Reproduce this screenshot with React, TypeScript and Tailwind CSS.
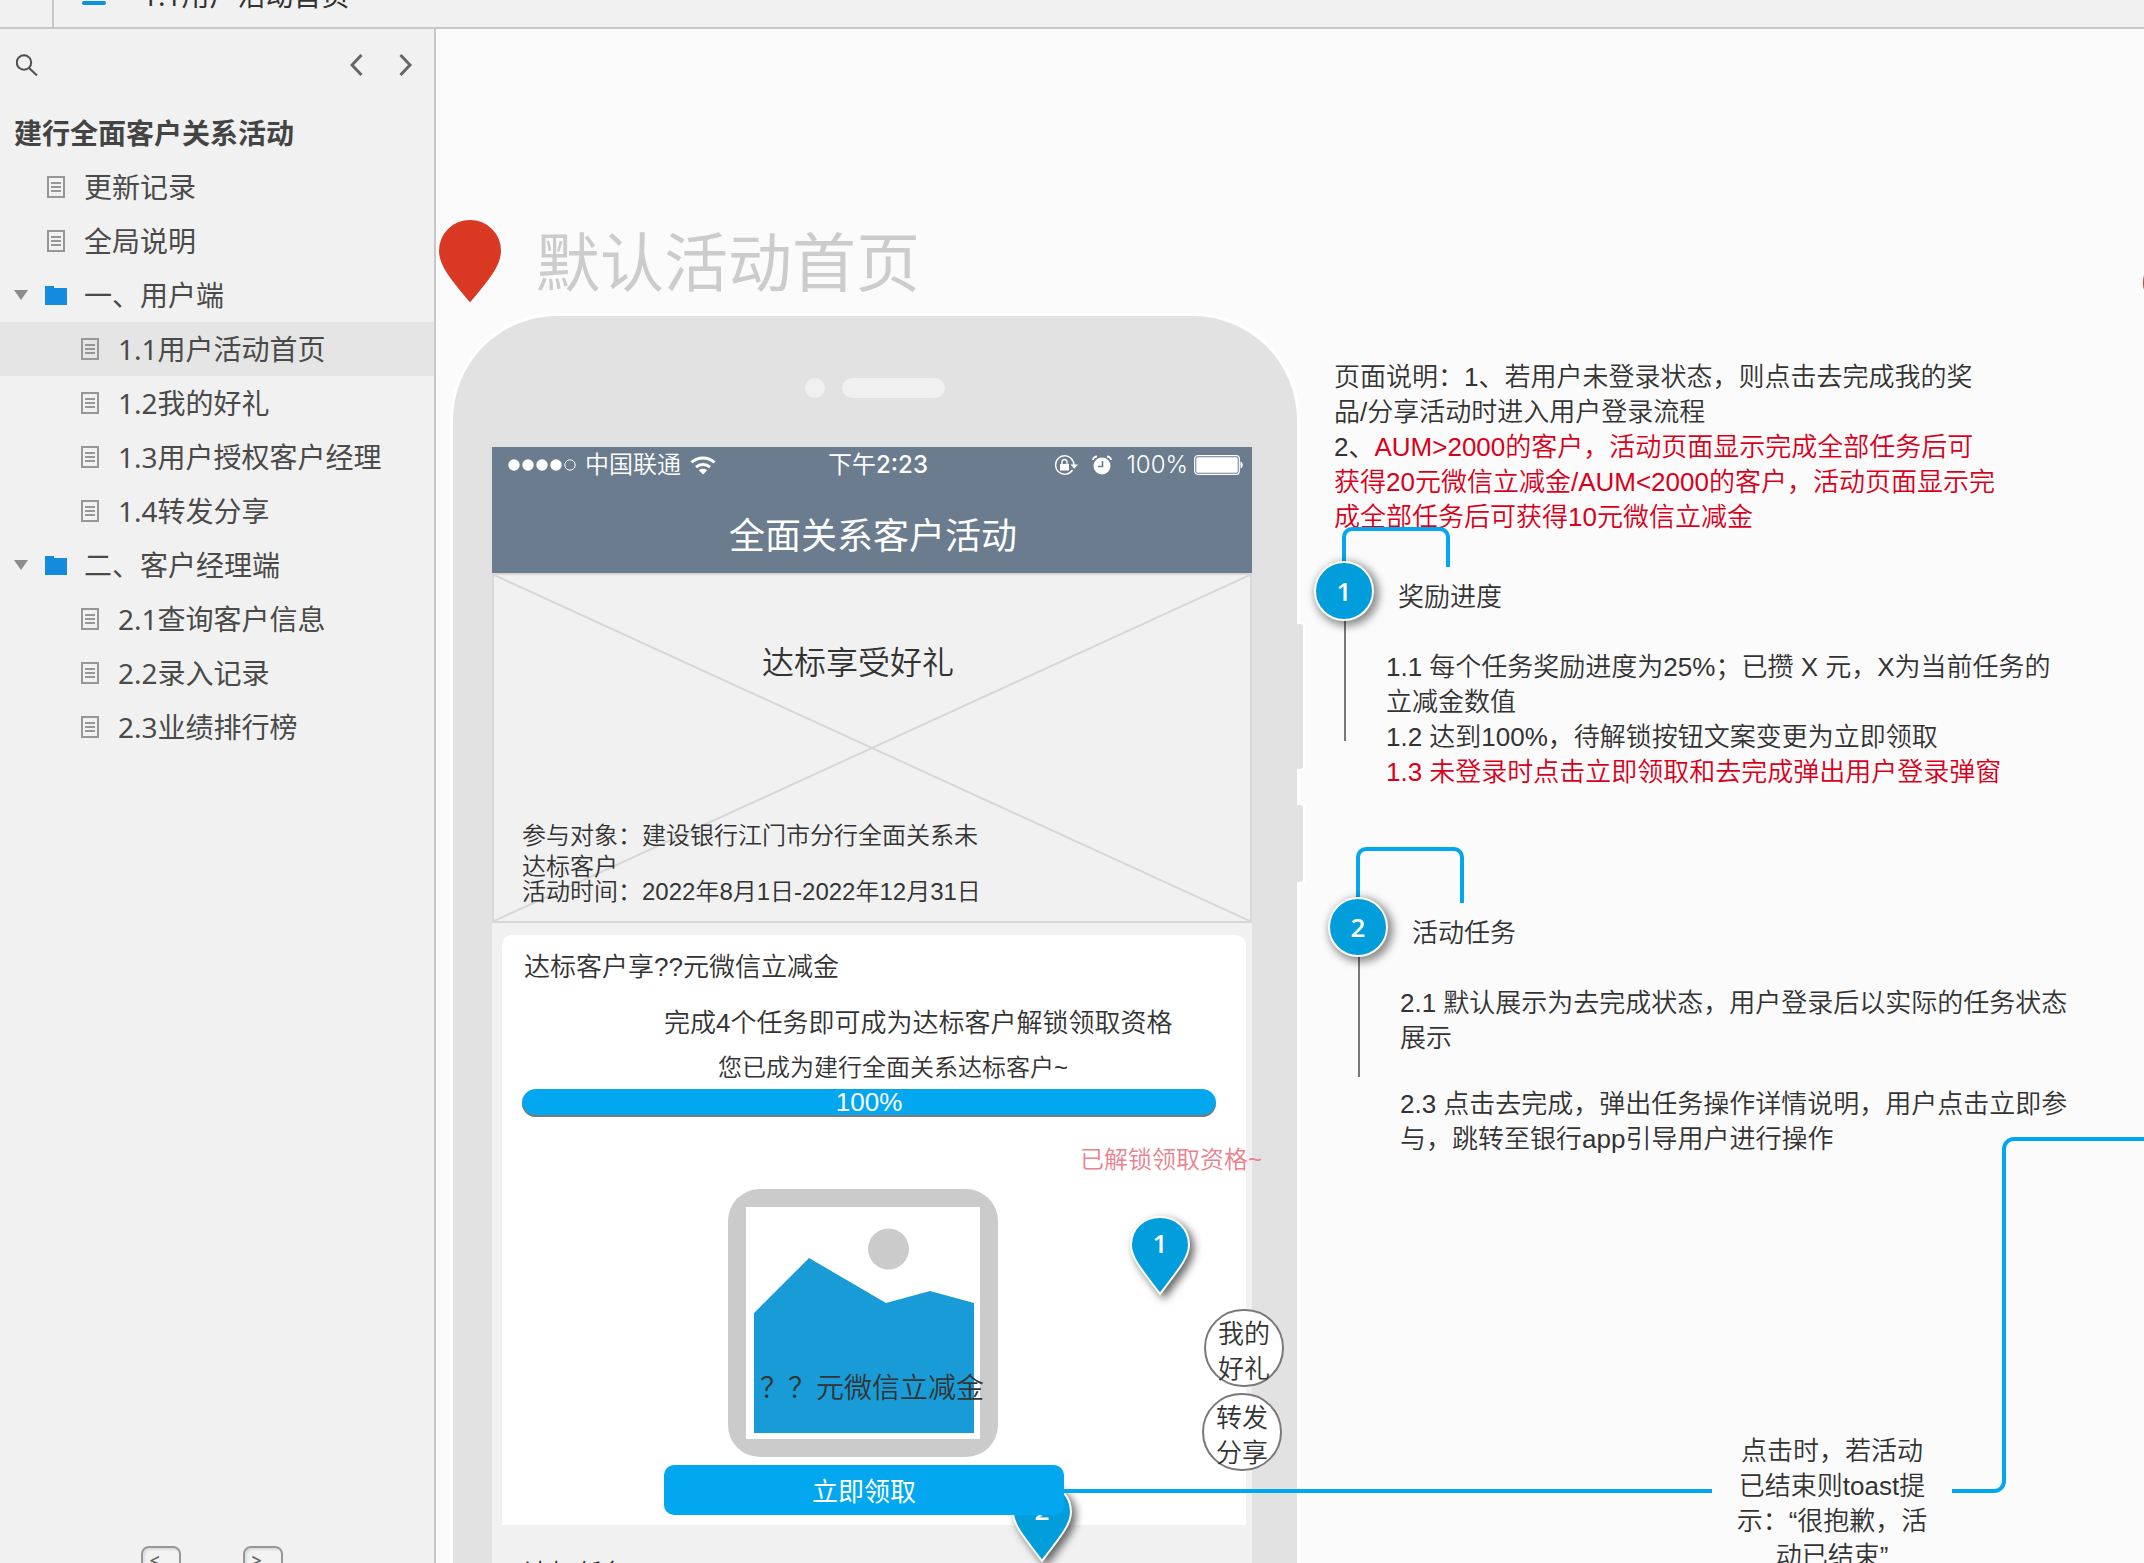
import React from "react";

type Page = { title: string; level: 1 | 2; folder?: boolean; active?: boolean };

const pages: Page[] = [
  { title: "更新记录", level: 1 },
  { title: "全局说明", level: 1 },
  { title: "一、用户端", level: 1, folder: true },
  { title: "1.1用户活动首页", level: 2, active: true },
  { title: "1.2我的好礼", level: 2 },
  { title: "1.3用户授权客户经理", level: 2 },
  { title: "1.4转发分享", level: 2 },
  { title: "二、客户经理端", level: 1, folder: true },
  { title: "2.1查询客户信息", level: 2 },
  { title: "2.2录入记录", level: 2 },
  { title: "2.3业绩排行榜", level: 2 },
];

function DocIcon() {
  return (
    <svg width="18" height="22" viewBox="0 0 18 22" fill="none" stroke="#979797" strokeWidth="2">
      <path d="M1 1h16v20H1zM4 7h10M4 11h10M4 15h10" />
    </svg>
  );
}

function FolderIcon() {
  return (
    <svg width="22" height="19" viewBox="0 0 22 19">
      <path d="M0 0h9v2h13v17H0z" fill="#158bdf" />
    </svg>
  );
}

function PageRow({ page }: { page: Page }) {
  return (
    <li>
      <a
        href="#"
        aria-current={page.active ? "page" : undefined}
        className={`flex h-[54px] items-center whitespace-nowrap ${page.active ? "bg-[#e5e5e5]" : ""} ${page.level === 2 ? "pl-[81px]" : "pl-[14px]"}`}
      >
        {page.level === 1 && (
          <span className="w-[31px] shrink-0">
            {page.folder && (
              <svg width="14" height="10" viewBox="0 0 14 10">
                <path d="M0 0h14L7 10z" fill="#8c8c8c" />
              </svg>
            )}
          </span>
        )}
        <span className={`flex shrink-0 ${page.level === 1 ? "w-[39px]" : "w-[37px]"}`}>
          {page.folder ? <FolderIcon /> : <span className={page.level === 1 ? "pl-0.5" : ""}><DocIcon /></span>}
        </span>
        <span>{page.title}</span>
      </a>
    </li>
  );
}

function Sidebar() {
  return (
    <aside className="flex w-[436px] shrink-0 flex-col border-r-2 border-[#c8c8c8] bg-[#f1f1f1] text-[28px] leading-9 text-[#4a4a4a] font-normal font-['Noto_Sans','Noto_Sans_CJK_SC',sans-serif]">
      <div className="flex h-[77px] shrink-0 items-start pt-[25px] pl-4 pr-[22px] text-[#666]">
        <button aria-label="搜索" className="mr-auto">
          <svg width="22" height="22" viewBox="0 0 22 22" fill="none" stroke="#4f4f4f" strokeWidth="2">
            <circle cx="8" cy="8.500" r="7.200" />
            <path d="M13 14l8 7.500" />
          </svg>
        </button>
        <button aria-label="上一页" className="mr-[36px]">
          <svg width="13" height="22" viewBox="0 0 13 22" fill="none" stroke="#666" strokeWidth="3">
            <path d="M11.500 1L2 11l9.500 10" />
          </svg>
        </button>
        <button aria-label="下一页">
          <svg width="13" height="22" viewBox="0 0 13 22" fill="none" stroke="#666" strokeWidth="3">
            <path d="M1.500 1L11 11l-9.500 10" />
          </svg>
        </button>
      </div>
      <h1 className="flex h-[54px] shrink-0 items-center pl-[14px] font-bold text-[#444]">建行全面客户关系活动</h1>
      <nav className="min-h-0 flex-1">
        <ul>
          {pages.map((p) => (
            <PageRow key={p.title} page={p} />
          ))}
        </ul>
      </nav>
      <div className="flex h-[17px] shrink-0 items-start gap-[14px] overflow-hidden pl-[90px] text-[22px] text-[#666]">
        <span className="pt-2">use</span>
        <kbd className="h-9 w-10 shrink-0 rounded-lg border-2 border-[#979797] bg-[#f3f3f3] pl-[7px] font-sans text-[18px] leading-[24px] font-semibold shadow-[inset_2px_2px_2px_#ddd]">&lt;</kbd>
        <span className="w-[34px] pt-2">and</span>
        <kbd className="h-9 w-10 shrink-0 rounded-lg border-2 border-[#979797] bg-[#f3f3f3] pl-[7px] font-sans text-[18px] leading-[24px] font-semibold shadow-[inset_2px_2px_2px_#ddd]">&gt;</kbd>
        <span className="pt-2">keys</span>
      </div>
    </aside>
  );
}

function RedPin() {
  return (
    <svg width="68" height="90" viewBox="0 0 68 90">
      <path
        d="M34 2C16 2 2 16 2 34c0 14 10 27 32 53 22-26 32-39 32-53C66 16 52 2 34 2z"
        fill="#d93823"
        stroke="#fff"
        strokeWidth="2"
      />
    </svg>
  );
}

function BluePin({ label }: { label: string }) {
  return (
    <div className="relative h-[84px] w-16">
      <svg width="64" height="84" viewBox="0 0 64 84" className="overflow-visible drop-shadow-[4px_4px_4px_rgba(0,0,0,0.6)]">
        <path
          d="M32 2C15 2 3 14 3 30c0 12 9 23 29 49 20-26 29-37 29-49C61 14 49 2 32 2z"
          fill="#029ddb"
          stroke="#fff"
          strokeWidth="2"
        />
      </svg>
      <span className="absolute inset-x-0 top-2.5 text-center text-[26px] leading-9 font-semibold text-white font-['Open_Sans',sans-serif]">{label}</span>
    </div>
  );
}

function Bubble({ label }: { label: string }) {
  return (
    <div className="flex size-[60px] items-center justify-center rounded-full border-2 border-white bg-[#029ddb] text-[26px] font-semibold text-white shadow-[3px_3px_8px_2px_rgba(0,0,0,0.45)] font-['Open_Sans',sans-serif]">
      {label}
    </div>
  );
}

function StatusBar() {
  return (
    <div className="grid h-[36px] grid-cols-[1fr_auto_1fr] items-center pl-4 pr-2 text-[24px] leading-9 text-white">
      <div className="flex items-center gap-[9px]">
        <svg width="68" height="12" viewBox="0 0 68 12" fill="#fff">
          <circle cx="6" cy="6" r="5.700" />
          <circle cx="20" cy="6" r="5.700" />
          <circle cx="34" cy="6" r="5.700" />
          <circle cx="48" cy="6" r="5.700" />
          <circle cx="62" cy="6" r="5.200" fill="none" stroke="#fff" />
        </svg>
        <span>中国联通</span>
        <svg width="26" height="19" viewBox="0 0 26 19" fill="none" stroke="#fff" strokeWidth="3">
          <path d="M1.500 6.500C8 0.500 18 0.500 24.500 6.500" />
          <path d="M6 11.200C10 7.700 16 7.700 20 11.200" />
          <path d="M13 18.500l-4.200-4.300c2.400-2 6-2 8.400 0z" fill="#fff" stroke="none" />
        </svg>
      </div>
      <div className="pl-1 font-medium font-['Inter','Noto_Sans_CJK_SC',sans-serif]">
        <span className="font-normal">下午</span>2:23
      </div>
      <div className="flex items-center justify-end">
        <svg width="24" height="20" viewBox="0 0 24 20" className="mr-3.5">
          <path d="M18.500 5A9.200 9.200 0 1 0 18.500 15" fill="none" stroke="#fff" strokeWidth="1.400" />
          <path d="M18 4.500a9.200 9.200 0 0 1 2 5.500" fill="none" stroke="#fff" strokeWidth="1.400" />
          <path d="M16.500 9.500h7.500l-3.700 4.200z" fill="#fff" />
          <path d="M6 9h9v6.500H6z" fill="#fff" />
          <path d="M8 9.500V7a2.500 2.500 0 0 1 5 0v2.500" fill="none" stroke="#fff" strokeWidth="1.400" />
        </svg>
        <svg width="20" height="20" viewBox="0 0 20 20" className="mr-3.5">
          <circle cx="10" cy="11" r="8.500" fill="#fff" />
          <path d="M10.500 6v5.500H6" fill="none" stroke="#6a7c8e" strokeWidth="1.600" />
          <path d="M1 5c0-2 2-3.500 4-3.500M19 5c0-2-2-3.500-4-3.500" fill="none" stroke="#fff" strokeWidth="1.800" />
        </svg>
        <span className="mr-1.5 font-['Inter',sans-serif]">100%</span>
        <svg width="50" height="20" viewBox="0 0 50 20">
          <rect x="0.700" y="0.700" width="44.600" height="18.600" rx="3" fill="none" stroke="#fff" strokeWidth="1.200" />
          <rect x="2.300" y="2.300" width="41.400" height="15.400" rx="1.500" fill="#fff" />
          <path d="M46.500 6.500c3 1 3 6 0 7z" fill="#fff" />
        </svg>
      </div>
    </div>
  );
}

function Banner() {
  return (
    <section className="relative h-[350px] border-2 border-[#d7d7d7] bg-[#f1f1f1]">
      <svg className="absolute inset-0 size-full" viewBox="0 0 756 346" preserveAspectRatio="none" stroke="#d7d7d7" strokeWidth="2">
        <path d="M0 0L756 346M756 0L0 346" />
      </svg>
      <div className="relative pl-7">
        <h3 className="pt-[63px] pl-[240px] text-[32px] leading-[50px]">达标享受好礼</h3>
        <p className="mt-[132px] w-[460px] text-[24px] leading-[31px]">参与对象：建设银行江门市分行全面关系未达标客户</p>
        <p className="-mt-1.5 text-[24px] leading-[31px]">活动时间：2022年8月1日-2022年12月31日</p>
      </div>
    </section>
  );
}

function RewardCard() {
  return (
    <section className="relative mt-3 ml-2.5 mr-1.5 h-[590px] rounded-t-[10px] bg-white pt-[14px] text-[26px] leading-9">
      <h3 className="pl-[22px]">达标客户享??元微信立减金</h3>
      <p className="mt-5 ml-[162px]">完成4个任务即可成为达标客户解锁领取资格</p>
      <p className="mt-[11px] ml-[216px] text-[24px] leading-8">您已成为建行全面关系达标客户~</p>
      <div
        role="progressbar"
        aria-valuenow={100}
        aria-label="任务进度"
        className="mt-[5px] ml-5 mr-[30px] h-7 rounded-[14px] bg-[#02a7f0] text-center leading-[26px] text-white shadow-[inset_0_-2px_0_#797979]"
      >
        100%
      </div>
      <div className="relative mt-[72px] ml-[226px] h-[268px] w-[270px]">
        <svg width="270" height="268" viewBox="0 0 270 268">
          <rect width="270" height="268" rx="32" fill="#cbcbcb" />
          <path d="M18 18h234v232H18z" fill="#fff" />
          <path d="M26 124l55-55 77 45 44-12 44 12v130H26z" fill="#189bd6" />
          <circle cx="160.500" cy="60" r="20.500" fill="#cbcbcb" />
        </svg>
        <span className="absolute top-[182px] left-8 whitespace-nowrap text-[28px] leading-9">？？元微信立减金</span>
      </div>
      <div className="absolute top-[547px] left-[508px]">
        <BluePin label="2" />
      </div>
      <button className="relative mt-2 ml-[162px] block h-[50px] w-[400px] rounded-[10px] bg-[#02a7f0] pt-1 font-normal text-white">立即领取</button>
      <p className="absolute top-[207px] left-[578px] whitespace-nowrap text-[24px] text-[#ec808d]">已解锁领取资格~</p>
      <div className="absolute top-[280px] left-[626px]">
        <BluePin label="1" />
      </div>
      <button className="absolute top-[374px] left-[702px] h-[78px] w-20 rounded-full border-2 border-[#797979] bg-white px-3 pt-1.5 leading-[35px]">
        我的好礼
      </button>
      <button className="absolute top-[458px] left-[700px] h-[78px] w-20 rounded-full border-2 border-[#797979] bg-white px-3 pt-1.5 leading-[35px]">
        转发分享
      </button>
    </section>
  );
}

function Phone() {
  return (
    <div className="relative h-[1600px] w-[844px] rounded-t-[104px] bg-[#e2e2e2] pr-[45px] pl-[39px] shadow-[0_0_0_3px_#fff]">
      <span className="absolute top-[305px] left-[844px] h-[151px] w-[9px] rounded-r-md border-y-3 border-r-3 border-white bg-[#e2e2e2]" />
      <span className="absolute top-[486px] left-[844px] h-[83px] w-[9px] rounded-r-md border-y-3 border-r-3 border-white bg-[#e2e2e2]" />
      <div className="flex h-[131px] items-start justify-center gap-[17px] pt-[62px] pl-1.5">
        <span className="size-5 rounded-full bg-[#f0f0f0]" />
        <span className="h-5 w-[103px] rounded-full bg-[#f0f0f0]" />
      </div>
      <div className="h-full bg-[#f1f1f1]">
        <header className="h-[126px] bg-[#6a7c8e] text-white">
          <StatusBar />
          <h2 className="pt-[29px] pl-0.5 text-center text-[36px] leading-[50px] font-normal">全面关系客户活动</h2>
        </header>
        <Banner />
        <RewardCard />
        <div className="flex justify-between pt-[31px] pl-8 pr-[30px] text-[26px] leading-9">
          <span>达标任务</span>
          <span>0/0</span>
        </div>
      </div>
    </div>
  );
}

function Canvas() {
  return (
    <main
      lang="zh-CN"
      className="relative min-w-0 flex-1 overflow-hidden bg-[#fbfbfb] text-[26px] leading-[35px] font-[350] whitespace-nowrap text-[#333] font-['Liberation_Sans','Noto_Sans_CJK_SC',sans-serif]"
    >
      <div className="absolute top-[188px] left-0">
        <RedPin />
      </div>
      <h2 className="absolute top-[187px] left-[100px] text-[64px] leading-[96px] font-normal text-[#ccc]">默认活动首页</h2>
      <div className="absolute top-[220px] left-[1704px]">
        <RedPin />
      </div>

      <div className="absolute top-[287px] left-[17px] whitespace-normal">
        <Phone />
      </div>

      <p className="absolute top-[331px] left-[898px]">
        页面说明：1、若用户未登录状态，则点击去完成我的奖
        <br />
        品/分享活动时进入用户登录流程
        <br />
        2、
        <span className="text-[#d9001b]">
          AUM&gt;2000的客户，活动页面显示完成全部任务后可
          <br />
          获得20元微信立减金/AUM&lt;2000的客户，活动页面显示完
          <br />
          成全部任务后可获得10元微信立减金
        </span>
      </p>

      <div className="absolute top-[498px] left-[906px] h-10 w-[108px] rounded-t-[10px] border-x-4 border-t-4 border-[#02a7f0]" />
      <div className="absolute top-[590px] left-[908px] h-[122px] w-0.5 bg-[#797979]" />
      <div className="absolute top-[532px] left-[878px]">
        <Bubble label="1" />
      </div>
      <p className="absolute top-[551px] left-[962px]">奖励进度</p>
      <p className="absolute top-[621px] left-[950px]">
        1.1 每个任务奖励进度为25%；已攒 X 元，X为当前任务的
        <br />
        立减金数值
        <br />
        1.2 达到100%，待解锁按钮文案变更为立即领取
        <br />
        <span className="text-[#d9001b]">1.3 未登录时点击立即领取和去完成弹出用户登录弹窗</span>
      </p>

      <div className="absolute top-[818px] left-[920px] h-14 w-[108px] rounded-t-[10px] border-x-4 border-t-4 border-[#02a7f0]" />
      <div className="absolute top-[926px] left-[922px] h-[122px] w-0.5 bg-[#797979]" />
      <div className="absolute top-[868px] left-[892px]">
        <Bubble label="2" />
      </div>
      <p className="absolute top-[887px] left-[976px]">活动任务</p>
      <div className="absolute top-[957px] left-[964px]">
        <p>
          2.1 默认展示为去完成状态，用户登录后以实际的任务状态
          <br />
          展示
        </p>
        <p className="mt-[31px]">
          2.3 点击去完成，弹出任务操作详情说明，用户点击立即参
          <br />
          与，跳转至银行app引导用户进行操作
        </p>
      </div>

      <div className="absolute top-[1460px] left-[628px] h-1 w-[648px] bg-[#02a7f0]" />
      <svg width="200" height="356" viewBox="0 0 200 356" fill="none" stroke="#02a7f0" strokeWidth="4" className="absolute top-[1108px] left-[1516px]">
        <path d="M0 354h42a10 10 0 0 0 10-10V12a10 10 0 0 1 10-10h138" />
      </svg>
      <p className="absolute top-[1405px] left-[1296px] w-[200px] text-center">
        点击时，若活动
        <br />
        已结束则toast提
        <br />
        示：“很抱歉，活
        <br />
        动已结束”
      </p>
    </main>
  );
}

export default function App() {
  return (
    <div className="flex h-screen flex-col overflow-hidden bg-[#f1f1f1]" lang="zh-CN">
      <header className="flex h-[29px] shrink-0 items-end overflow-hidden border-b-2 border-[#c8c8c8] text-[28px] font-normal text-[#333] font-['Noto_Sans','Noto_Sans_CJK_SC',sans-serif]">
        <span className="h-[27px] w-[54px] border-r-2 border-[#c8c8c8]" />
        <button aria-label="菜单" className="ml-7 mb-[22px] h-1 w-6 rounded-full bg-[#0a93d6]" />
        <span className="mb-3.5 ml-9 leading-9">1.1用户活动首页</span>
      </header>
      <div className="flex min-h-0 flex-1">
        <Sidebar />
        <Canvas />
      </div>
    </div>
  );
}
